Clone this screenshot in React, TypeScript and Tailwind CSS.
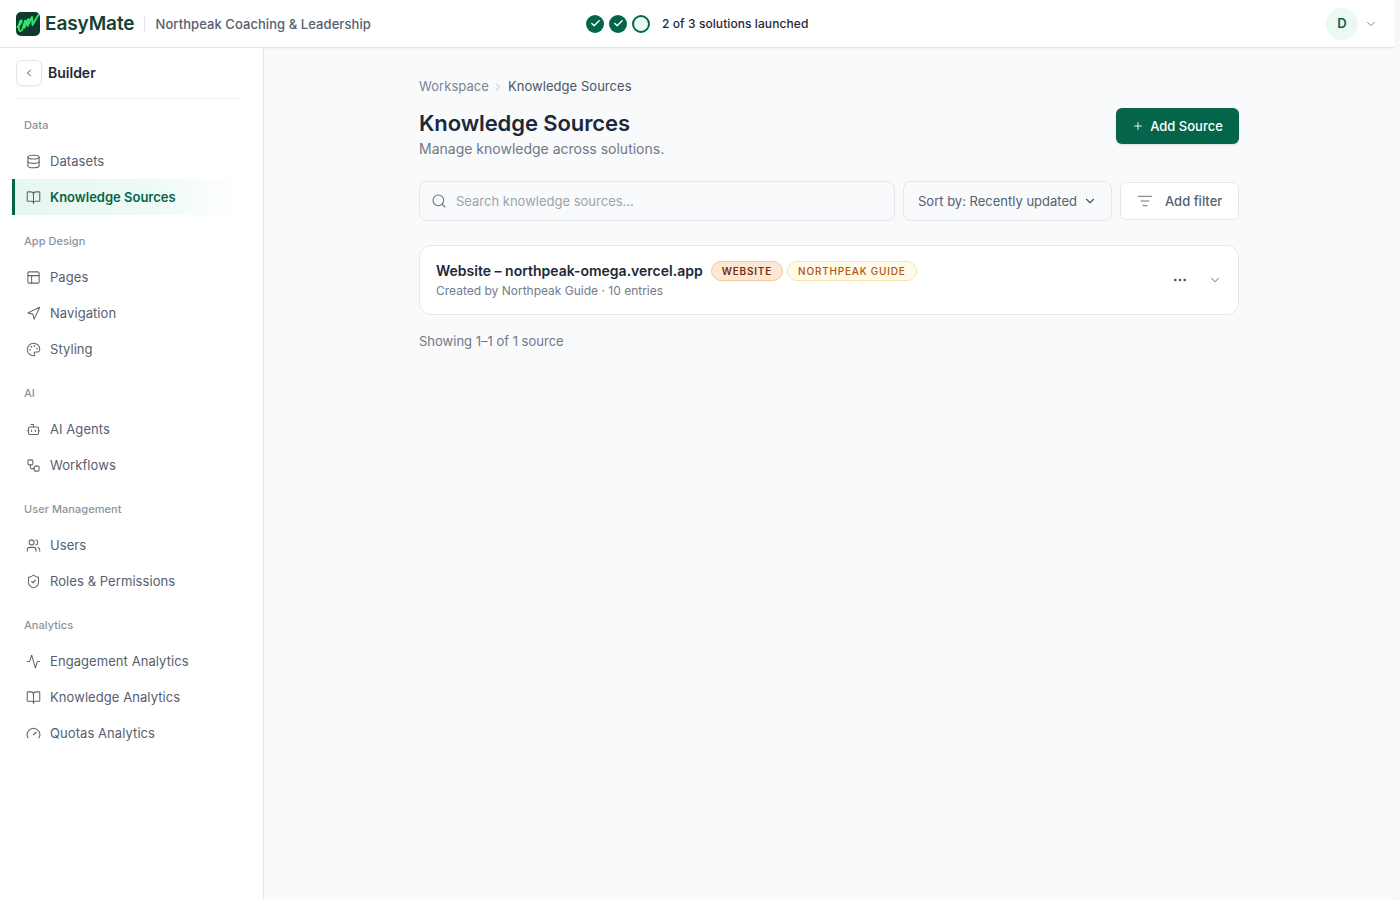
import React from "react";
import {
  ChevronLeft, ChevronRight, ChevronDown, Database, BookOpen, Layout, Navigation, Palette, Bot, Workflow,
  Users, ShieldCheck, Activity, Gauge, Search, Plus, Check, MoreHorizontal, ListFilter,
} from "lucide-react";

const groups = [
  { title: "Data", items: [{ label: "Datasets", icon: Database }, { label: "Knowledge Sources", icon: BookOpen, active: true }] },
  { title: "App Design", items: [{ label: "Pages", icon: Layout }, { label: "Navigation", icon: Navigation }, { label: "Styling", icon: Palette }] },
  { title: "AI", items: [{ label: "AI Agents", icon: Bot }, { label: "Workflows", icon: Workflow }] },
  { title: "User Management", items: [{ label: "Users", icon: Users }, { label: "Roles & Permissions", icon: ShieldCheck }] },
  { title: "Analytics", items: [{ label: "Engagement Analytics", icon: Activity }, { label: "Knowledge Analytics", icon: BookOpen }, { label: "Quotas Analytics", icon: Gauge }] },
];

function Logo() {
  return (
    <div className="w-6 h-6 rounded-[5px] bg-[#0e3b2e] flex items-center justify-center overflow-hidden">
      <svg viewBox="0 0 24 24" className="w-6 h-6" fill="none" stroke="#2fe56f" strokeWidth="1.9" strokeLinecap="round" strokeLinejoin="round">
        <path d="M1.5 15C4 13 6.500 9.500 5.500 8.500C4.500 7.500 2.500 12 2.800 16C3 20 5.500 20 6.500 17L9 9C9.500 8 9.800 9 9.500 10.500L8.500 15.500L12 7.500C12.500 6.500 12.800 7.500 12.500 9L11.800 14L15 6.500L16 5C16.500 8 16 11 16.500 13L21 5L22.500 3" />
      </svg>
    </div>
  );
}

export default function App() {
  return (
    <div className="h-[900px] bg-[#f8f8f9] overflow-hidden">
      <div className="h-[900px] flex flex-col bg-[#f9fafc] overflow-hidden text-[#4b5563] font-['Inter',sans-serif] mr-[6px]">
        <header className="h-12 shrink-0 bg-white border-b border-[#e5e7eb] shadow-[0_1px_2px_rgba(0,0,0,0.03)] flex items-center pl-4 pr-[16px]">
          <div className="flex items-center w-[570px]">
            <Logo />
            <span className="ml-[5px] pt-px text-[19px] font-semibold tracking-[-0.1px] text-[#173f33]">EasyMate</span>
            <span className="ml-[10px] w-px h-4 bg-[#e5e7eb]" />
            <span className="ml-[10px] pt-[2px] text-[13px] tracking-[0.07px] font-medium text-[#566070]">Northpeak Coaching &amp; Leadership</span>
          </div>
          <div className="flex items-center gap-[5px]">
            <span className="w-[18px] h-[18px] rounded-full bg-[#05654a] flex items-center justify-center"><Check className="w-[11px] h-[11px] text-white" strokeWidth={3} /></span>
            <span className="w-[18px] h-[18px] rounded-full bg-[#05654a] flex items-center justify-center"><Check className="w-[11px] h-[11px] text-white" strokeWidth={3} /></span>
            <span className="w-[18px] h-[18px] rounded-full bg-[#ecf8f3] border-2 border-[#05654a]" />
            <span className="ml-[7px] text-xs tracking-[0.08px] font-medium text-[#1f2937]">2 of 3 solutions launched</span>
          </div>
          <div className="ml-auto flex items-center gap-[6px]">
            <span className="w-8 h-8 rounded-full bg-[#ecf8f3] text-[#05654a] text-[13px] font-semibold flex items-center justify-center">D</span>
            <ChevronDown className="w-[14px] h-[14px] text-[#6b7280]" strokeWidth={1.5} />
          </div>
        </header>
        <div className="flex flex-1 min-h-0">
          <aside className="w-[264px] shrink-0 bg-white border-r border-[#e5e7eb] pl-3 pr-[23px]">
            <div className="ml-1 h-[51px] flex items-center gap-[6px] border-b border-[#eef0f3]">
              <button className="w-[26px] h-[26px] rounded-md border border-[#e5e7eb] bg-white shadow-[0_1px_2px_rgba(0,0,0,0.05)] flex items-center justify-center">
                <ChevronLeft className="w-3 h-3 text-[#4b5563]" />
              </button>
              <span className="text-sm font-semibold text-[#1f2937]">Builder</span>
            </div>
            <nav className="pt-[18px]">
              {groups.map((g) => (
                <div key={g.title} className="mb-[18px]">
                  <div className="px-3 h-4 flex items-center text-[11px] tracking-[0.05px] font-medium text-[#8b93a1]">{g.title}</div>
                  <div className="mt-[10px]">
                    {g.items.map((it) => {
                      const Icon = it.icon;
                      return it.active ? (
                        <div key={it.label} className="h-9 flex items-center gap-[9.500px] pl-[10.500px] border-l-[3px] border-[#05654a] bg-gradient-to-r from-[#e6f7f0] via-[#eefaf5] via-60% to-white text-[#05654a] text-[13px] font-semibold">
                          <Icon className="w-[15px] h-[15px] text-[#5f6875]" strokeWidth={1.7} />
                          <span className="pt-[2px]">{it.label}</span>
                        </div>
                      ) : (
                        <div key={it.label} className="h-9 flex items-center gap-[9.500px] pl-[13.500px] text-[13px] tracking-[0.07px] font-normal text-[#566070]">
                          <Icon className="w-[15px] h-[15px] text-[#5f6875]" strokeWidth={1.7} />
                          <span className="pt-[2px]">{it.label}</span>
                        </div>
                      );
                    })}
                  </div>
                </div>
              ))}
            </nav>
          </aside>
          <main className="flex-1 min-w-0 pl-[155px] pt-[28px]">
            <div className="w-[820px]">
              <div className="flex items-center gap-[3.500px] text-[13px] tracking-[0.05px] h-5 pt-[2px]">
                <span className="text-[#7b8494]">Workspace</span>
                <ChevronRight className="w-3 h-3 text-[#9ca3af]" strokeWidth={1.5} />
                <span className="text-[#4b5563]">Knowledge Sources</span>
              </div>
              <div className="flex items-start justify-between mt-3">
                <div>
                  <h1 className="text-[22px] leading-[30px] tracking-[-0.1px] font-semibold text-[#1e2938]">Knowledge Sources</h1>
                  <p className="mt-px text-sm leading-[20px] text-[#6f7887]">Manage knowledge across solutions.</p>
                </div>
                <button className="h-9 w-[123px] rounded-md bg-[#05654a] text-white text-[13px] font-medium flex items-center justify-center gap-[6px] shadow-sm">
                  <Plus className="w-3 h-3" strokeWidth={1.8} />
                  <span className="pt-[2px]">Add Source</span>
                </button>
              </div>
              <div className="flex items-center gap-2 mt-[22px]">
                <div className="w-[476px] h-10 rounded-lg border border-[#e5e7eb] bg-[#f9fafb] flex items-center gap-[9px] pl-[11px]">
                  <Search className="w-4 h-4 text-[#6b7280]" strokeWidth={1.6} />
                  <span className="pt-[2px] text-[13px] text-[#9ca3af]">Search knowledge sources...</span>
                </div>
                <div className="w-[209px] h-10 rounded-lg border border-[#e5e7eb] bg-[#f9fafb] flex items-center gap-[6px] pl-[14px] text-[13px] text-[#566070]">
                  <span className="pt-[2px]">Sort by: Recently updated</span>
                  <ChevronDown className="w-3.5 h-3.5 text-[#4b5563]" strokeWidth={2} />
                </div>
                <div className="w-[119px] h-[38px] rounded-md border border-[#e5e7eb] bg-white flex items-center gap-[12px] pl-[16px] text-[13px] font-medium text-[#566070]">
                  <ListFilter className="w-4 h-4 text-[#6b7280]" strokeWidth={1.5} />
                  <span className="pt-[2px]">Add filter</span>
                </div>
              </div>
              <div className="mt-[24px] h-[70px] rounded-xl border border-[#e5e7eb] bg-white flex items-center pl-4 pr-4">
                <div>
                  <div className="flex items-center">
                    <span className="text-sm font-semibold text-[#1e2938]">Website – northpeak-omega.vercel.app</span>
                    <span className="ml-2 h-5 px-[10px] rounded-full border border-[#f3c8a2] bg-[#fde8d4] text-[10px] font-semibold tracking-[0.8px] text-[#7c2d12] flex items-center">WEBSITE</span>
                    <span className="ml-1 h-5 px-[10px] rounded-full border border-[#fbe3a5] bg-[#fffbeb] text-[10px] font-medium tracking-[0.8px] text-[#b45309] flex items-center">NORTHPEAK GUIDE</span>
                  </div>
                  <div className="mt-[2px] text-xs text-[#737c8a]">Created by Northpeak Guide · 10 entries</div>
                </div>
                <div className="ml-auto flex items-center gap-5">
                  <MoreHorizontal className="w-4 h-4 text-[#4b5563]" />
                  <ChevronDown className="w-[14px] h-[14px] text-[#4b5563]" strokeWidth={1.5} />
                </div>
              </div>
              <p className="mt-[16px] text-[13px] leading-5 text-[#6f7887]">Showing 1–1 of 1 source</p>
            </div>
          </main>
        </div>
      </div>
    </div>
  );
}
